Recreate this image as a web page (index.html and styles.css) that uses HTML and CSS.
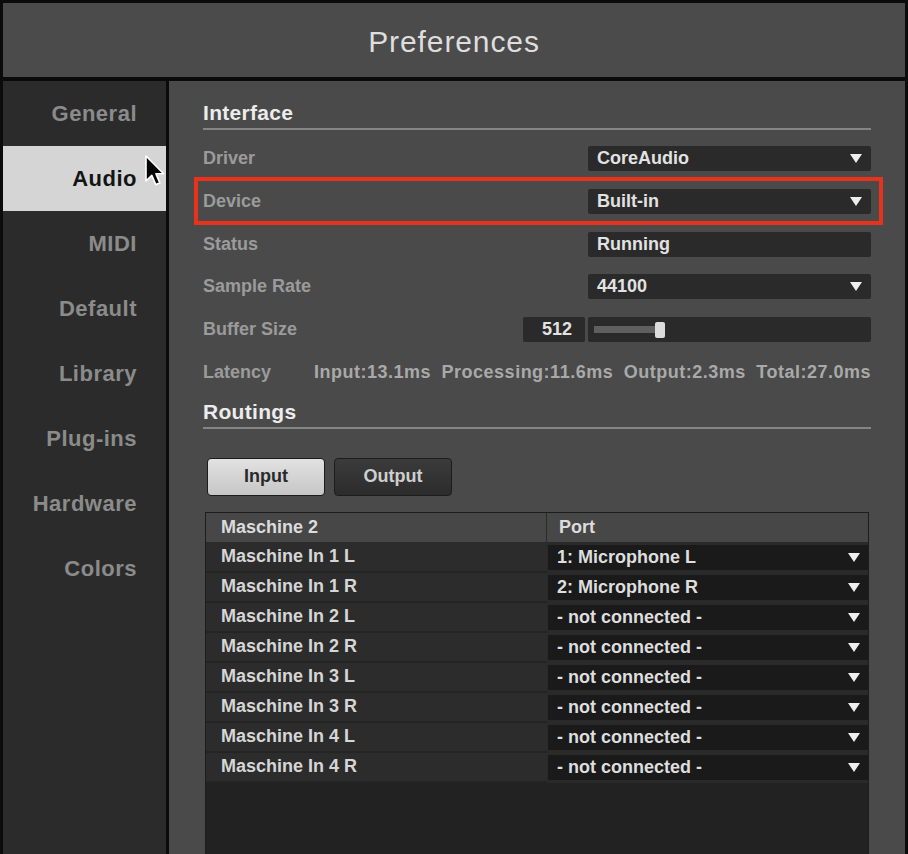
FILE: index.html
```html
<!DOCTYPE html>
<html lang="en">
<head>
    <meta charset="UTF-8">
    <meta name="viewport" content="width=device-width, initial-scale=1.0">
    <title>Preferences</title>
    <link rel="stylesheet" href="styles.css">
</head>
<body>
    <div class="window">
        <div class="titlebar">Preferences</div>
        <div class="main">
            <nav class="sidebar">
                <div class="tab">General</div>
                <div class="tab active">Audio</div>
                <div class="tab">MIDI</div>
                <div class="tab">Default</div>
                <div class="tab">Library</div>
                <div class="tab">Plug-ins</div>
                <div class="tab">Hardware</div>
                <div class="tab">Colors</div>
                <svg class="cursor" width="24" height="34" viewBox="0 0 24 34">
                    <path d="M2 2 L2 27 L7.8 21.4 L11.8 30.6 L15.8 28.9 L11.9 19.8 L19.6 19.8 Z" fill="#050505" stroke="#fff" stroke-width="1.6" stroke-linejoin="round"/>
                </svg>
            </nav>
            <section class="panel">
                <h2 class="heading">Interface</h2>
                <div class="settings">
                    <div class="row">
                        <span class="label">Driver</span>
                        <div class="field">CoreAudio<span class="arrow"></span></div>
                    </div>
                    <div class="row highlight">
                        <span class="label">Device</span>
                        <div class="field">Built-in<span class="arrow"></span></div>
                    </div>
                    <div class="row">
                        <span class="label">Status</span>
                        <div class="field">Running</div>
                    </div>
                    <div class="row">
                        <span class="label">Sample Rate</span>
                        <div class="field">44100<span class="arrow"></span></div>
                    </div>
                    <div class="row">
                        <span class="label">Buffer Size</span>
                        <div class="num">512</div>
                        <div class="slider"><span class="fill"></span><span class="knob"></span></div>
                    </div>
                    <div class="row">
                        <span class="label latency-label">Latency</span>
                        <div class="latency">
                            <span>Input:13.1ms</span>
                            <span>Processing:11.6ms</span>
                            <span>Output:2.3ms</span>
                            <span>Total:27.0ms</span>
                        </div>
                    </div>
                </div>

                <h2 class="heading routings">Routings</h2>
                <div class="switch">
                    <button class="btn on">Input</button>
                    <button class="btn">Output</button>
                </div>

                <div class="table">
                    <div class="th first">Maschine 2</div>
                    <div class="th">Port</div>

                    <div class="cell">Maschine In 1 L</div>
                    <div class="port"><div class="drop">1: Microphone L<span class="arrow"></span></div></div>
                    <div class="cell">Maschine In 1 R</div>
                    <div class="port"><div class="drop">2: Microphone R<span class="arrow"></span></div></div>
                    <div class="cell">Maschine In 2 L</div>
                    <div class="port"><div class="drop">- not connected -<span class="arrow"></span></div></div>
                    <div class="cell">Maschine In 2 R</div>
                    <div class="port"><div class="drop">- not connected -<span class="arrow"></span></div></div>
                    <div class="cell">Maschine In 3 L</div>
                    <div class="port"><div class="drop">- not connected -<span class="arrow"></span></div></div>
                    <div class="cell">Maschine In 3 R</div>
                    <div class="port"><div class="drop">- not connected -<span class="arrow"></span></div></div>
                    <div class="cell">Maschine In 4 L</div>
                    <div class="port"><div class="drop">- not connected -<span class="arrow"></span></div></div>
                    <div class="cell">Maschine In 4 R</div>
                    <div class="port"><div class="drop">- not connected -<span class="arrow"></span></div></div>
                </div>
            </section>
        </div>
    </div>
</body>
</html>
```

FILE: styles.css
```css
* {
    box-sizing: border-box;
}
html, body {
    margin: 0;
    height: 100%;
    overflow: hidden;
    background-color: #0b0b0b;
}
body {
    font-family: "Liberation Sans", Arial, sans-serif;
}
.window {
    width: 908px;
    height: 980px;
    border: 3px solid #0b0b0b;
    border-bottom: none;
    display: flex;
    flex-direction: column;
}
.titlebar {
    height: 74px;
    margin-bottom: 4px;
    padding-top: 4px;
    background-color: #4b4b4b;
    color: #dedede;
    font-size: 30px;
    letter-spacing: 0.9px;
    display: flex;
    align-items: center;
    justify-content: center;
}
.main {
    flex: 1;
    display: flex;
    gap: 3px;
}

/* left tabs */
.sidebar {
    width: 163px;
    background-color: #2b2b2b;
    position: relative;
}
.tab {
    height: 65px;
    padding-right: 29px;
    display: flex;
    align-items: center;
    justify-content: flex-end;
    font-size: 22px;
    font-weight: bold;
    letter-spacing: 0.5px;
    color: #8b8b8b;
}
.tab.active {
    background-color: #d5d5d5;
    color: #141414;
}
.cursor {
    position: absolute;
    left: 141px;
    top: 73px;
}

/* right panel */
.panel {
    flex: 1;
    background-color: #4a4a4a;
    padding: 20px 34px 0 34px;
}
.heading {
    margin: 0;
    padding-bottom: 3px;
    border-bottom: 2px solid #858585;
    font-size: 21px;
    line-height: 24px;
    letter-spacing: 0.3px;
    font-weight: bold;
    color: #ececec;
}
.routings {
    margin-top: 15px;
}
.settings {
    margin-top: 16px;
    display: flex;
    flex-direction: column;
    gap: 17.75px;
}
.row {
    height: 25px;
    display: flex;
    align-items: center;
    position: relative;
}
.label {
    flex: 1;
    font-size: 18px;
    font-weight: bold;
    color: #9b9b9b;
}
.field {
    width: 283px;
    height: 25px;
    padding: 0 9px;
    background-color: #2a2a2a;
    border-radius: 2px;
    display: flex;
    align-items: center;
    justify-content: space-between;
    font-size: 18px;
    font-weight: bold;
    color: #e2e2e2;
}
.arrow {
    width: 0;
    height: 0;
    border-left: 6px solid transparent;
    border-right: 6px solid transparent;
    border-top: 9px solid #eeeeee;
}
.highlight::after {
    content: "";
    position: absolute;
    inset: -12px -12px -11px -9px;
    border: 4px solid #e8321c;
}
.num {
    width: 62px;
    height: 25px;
    margin-right: 3px;
    padding-right: 13px;
    background-color: #2a2a2a;
    border-radius: 2px;
    text-align: right;
    line-height: 25px;
    font-size: 18px;
    font-weight: bold;
    color: #e2e2e2;
}
.slider {
    width: 283px;
    height: 25px;
    padding-left: 6px;
    background-color: #2a2a2a;
    border-radius: 2px;
    display: flex;
    align-items: center;
}
.fill {
    width: 62px;
    height: 7px;
    background-color: #5f5f5f;
}
.knob {
    width: 10px;
    height: 16px;
    margin-left: -1px;
    background-color: #dcdcdc;
    border-radius: 2px;
}
.latency-label {
    flex: 0 0 111px;
}
.latency {
    flex: 1;
    display: flex;
    justify-content: space-between;
    font-size: 18px;
    font-weight: bold;
    letter-spacing: 0.5px;
    color: #a9a9a9;
}

/* input / output switch */
.switch {
    margin-top: 29px;
    padding-left: 4px;
    display: flex;
    gap: 9px;
}
.btn {
    width: 118px;
    height: 38px;
    border: 1px solid #1c1c1c;
    border-radius: 4px;
    background: linear-gradient(#3b3b3b, #2c2c2c);
    color: #cfcfcf;
    font-family: "Liberation Sans", Arial, sans-serif;
    font-size: 18px;
    font-weight: bold;
}
.btn.on {
    background: linear-gradient(#e2e2e2, #c6c6c6);
    color: #2a2a2a;
}

/* routing table */
.table {
    margin: 16px 2px 0 2px;
    min-height: 420px;
    border: 1px solid #1d1d1d;
    background-color: #222222;
    display: grid;
    grid-template-columns: 341px 1fr;
    align-content: start;
}
.th {
    height: 30px;
    padding-left: 12px;
    background-color: #474747;
    border-bottom: 1px solid #2a2a2a;
    display: flex;
    align-items: center;
    font-size: 18px;
    font-weight: bold;
    color: #dcdcdc;
}
.th.first {
    padding-left: 15px;
    border-right: 1px solid #2b2b2b;
}
.cell {
    height: 30px;
    padding-left: 15px;
    background-color: #2c2c2c;
    border-bottom: 2px solid #242424;
    display: flex;
    align-items: center;
    font-size: 18px;
    font-weight: bold;
    color: #d6d6d6;
}
.port {
    height: 30px;
    padding: 2px 0 3px 1px;
    background-color: #2a2a2a;
}
.drop {
    height: 25px;
    padding: 0 8px 0 9px;
    background-color: #1a1a1a;
    display: flex;
    align-items: center;
    justify-content: space-between;
    font-size: 18px;
    font-weight: bold;
    color: #dedede;
}
```
